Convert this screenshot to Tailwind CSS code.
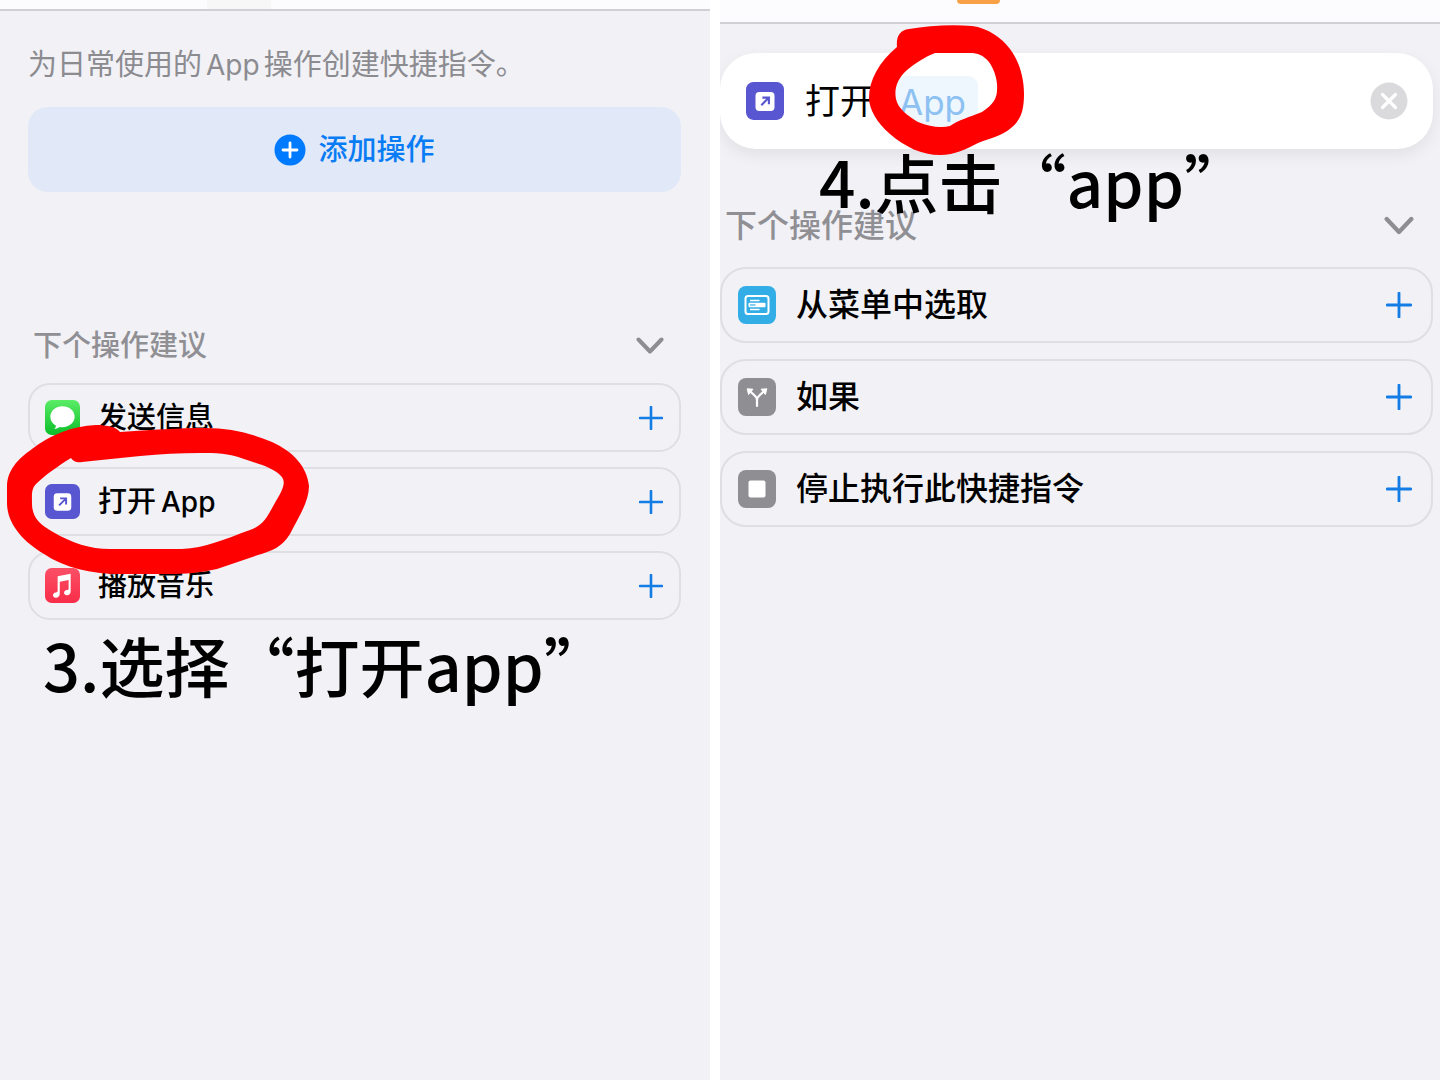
<!DOCTYPE html>
<html lang="zh-CN">
<head>
  <meta charset="UTF-8" />
  <title>快捷指令教程</title>
  <meta name="viewport" content="width=device-width, initial-scale=1.0"/>
  <script src="https://cdn.jsdelivr.net/npm/@tailwindcss/browser@4"></script>
</head>
<body class="bg-white text-black font-[Inter,'Noto_Sans_CJK_SC',sans-serif]">

  <!-- shared icons -->
  <svg class="hidden">
    <symbol id="plus" viewBox="0 0 24 24"><path d="M12 1v22M1 12h22" fill="none" stroke="#147ce5" stroke-width="2.6" stroke-linecap="round"/></symbol>
    <symbol id="chevron" viewBox="0 0 28 18"><path d="M2.500 2.500L14 14.500L25.500 2.500" fill="none" stroke="#8d8d92" stroke-width="4" stroke-linecap="round" stroke-linejoin="round"/></symbol>
    <symbol id="open-app" viewBox="0 0 36 36">
      <rect width="36" height="36" rx="7" fill="#5856d0"/>
      <rect x="9" y="9.500" width="18" height="18" rx="3.500" fill="#fff"/>
      <path d="M14.500 22L21 15.500M15.500 14.800H21.700V21" fill="none" stroke="#5856d0" stroke-width="2"/>
    </symbol>
  </svg>

  <div class="flex gap-[10px] min-h-screen">

    <!-- step 3 -->
    <main class="relative flex-[71] bg-[#f1f1f6] overflow-hidden">
      <header class="h-[11px] bg-[#fcfcfe] border-b-2 border-[#d0d0d4] flex justify-center pr-[232px]"><div class="w-16 bg-[#f7f7f8]"></div></header>
      <div class="pl-7 pr-[29px]">
        <p class="pt-[34px] text-[29px] leading-10 text-[#8b8b90]">为日常使用的<span class="mx-1 text-[28px]">App</span>操作创建快捷指令。</p>
        <button class="mt-[22px] w-full h-[85px] rounded-[20px] bg-[#e1e8f7] flex items-center justify-center gap-3 text-[29px] font-medium text-[#087cf4]">
          <svg class="w-8 h-8" viewBox="0 0 32 32"><circle cx="16" cy="16" r="15.500" fill="#007aff"/><path d="M16 9v14M9 16h14" stroke="#fff" stroke-width="2.800" stroke-linecap="round"/></svg>
          添加操作
        </button>
        <div class="mt-[134px] pl-[5px] pr-[17px] flex items-center justify-between">
          <h2 class="text-[29px] leading-10 font-medium text-[#8f8f94]">下个操作建议</h2>
          <button aria-label="收起"><svg class="w-7 h-[18px]"><use href="#chevron"/></svg></button>
        </div>
        <ul class="mt-[17px] flex flex-col gap-[15px] text-[29px] font-medium">
          <li class="h-[69px] pl-[15px] pr-4 border-2 border-[#dedee3] rounded-[22px] flex items-center gap-[18px]">
            <svg class="w-[35px] h-[35px]" viewBox="0 0 36 36">
              <defs><linearGradient id="green" x2="0" y2="1"><stop stop-color="#5bed67"/><stop offset="1" stop-color="#0bbd29"/></linearGradient></defs>
              <rect width="36" height="36" rx="7" fill="url(#green)"/>
              <path d="M18 6.500C11 6.500 5.500 11.300 5.500 17.300C5.500 21.200 7.800 24.500 11.300 26.500C11.200 27.800 10.500 28.800 9.400 29.600C11.900 29.600 13.700 28.800 15.100 27.700C16 27.900 17 28 18 28C25 28 30.500 23.200 30.500 17.300C30.500 11.300 25 6.500 18 6.500Z" fill="#fff"/>
            </svg>
            <span class="flex-1">发送信息</span>
            <button aria-label="添加发送信息"><svg class="w-6 h-6"><use href="#plus"/></svg></button>
          </li>
          <li class="h-[69px] pl-[15px] pr-4 border-2 border-[#dedee3] rounded-[22px] flex items-center gap-[18px]">
            <svg class="w-[35px] h-[35px]"><use href="#open-app"/></svg>
            <span class="flex-1">打开<span class="ml-[5px] text-[28px]">App</span></span>
            <button aria-label="添加打开 App"><svg class="w-6 h-6"><use href="#plus"/></svg></button>
          </li>
          <li class="h-[69px] pl-[15px] pr-4 border-2 border-[#dedee3] rounded-[22px] flex items-center gap-[18px]">
            <svg class="w-[35px] h-[35px]" viewBox="0 0 36 36">
              <defs><linearGradient id="red" x2="0" y2="1"><stop stop-color="#fb4f66"/><stop offset="1" stop-color="#f92d49"/></linearGradient></defs>
              <rect width="36" height="36" rx="7" fill="url(#red)"/>
              <path fill-rule="evenodd" d="M13 8.600L26.400 5.800V23.800C26.400 26.500 24.800 28 22.500 28C20.800 28 19.600 27 19.600 25.500C19.600 23.900 20.700 23 22.500 22.700C23.800 22.400 24.300 22 24.300 21V12.300L15.200 14.200V26.200C15.200 29 13.600 30.500 11.200 30.500C9.400 30.500 8.200 29.400 8.200 27.900C8.200 26.300 9.400 25.400 11.100 25.100C12.400 24.800 13 24.400 13 23.400Z" fill="#fff"/>
            </svg>
            <span class="flex-1">播放音乐</span>
            <button aria-label="添加播放音乐"><svg class="w-6 h-6"><use href="#plus"/></svg></button>
          </li>
        </ul>
        <p class="pl-[15px] text-[65px] leading-[88px] font-medium whitespace-nowrap font-['Noto_Sans_CJK_SC',sans-serif]">3.选择“打开app”</p>
      </div>
      <!-- hand-drawn ring round the second row -->
      <svg class="absolute left-0 top-[420px] w-[320px] h-[160px] pointer-events-none" viewBox="0 420 320 160">
        <path fill="#f00" fill-rule="evenodd" d="M120 432C150 430 180 428 205 428C230 428 250 433 272 442C294 452 307 467 309 486C309 502 298 518 290 534C282 547 272 551 258 555L217 569C200 573 185 574 168 574H118C92 574 65 568 44 554C22 541 7 523 7 503V487C7 470 18 459 32 449C50 435 72 426 96 425C108 425 116 427 120 432ZM71 458C58 466 44 476 36 484C31 489 32 496 32 504C32 517 40 525 53 532C72 543 90 549 110 549H182C205 548 225 539 250 530C265 525 269 513 276 501C284 488 286 481 281 476C274 468 259 464 244 459C228 453 216 453 200 453C160 453 120 458 82 462C76 463 73 461 71 458Z"/>
      </svg>
    </main>

    <!-- step 4 -->
    <section class="relative flex-[72] bg-[#f1f1f6] overflow-hidden">
      <header class="h-6 bg-[#fcfcfe] border-b-2 border-[#d0d0d4] flex justify-center pr-[203px]"><div class="w-[43px] h-1 rounded-b-md bg-[#f7a046]"></div></header>
      <div class="pr-[7px]">
        <div class="mt-[29px] h-24 pl-[26px] pr-[25px] rounded-[36px] bg-white shadow-[0_6px_16px_rgba(0,0,0,0.07)] flex items-center">
          <svg class="w-[38px] h-[38px]"><use href="#open-app"/></svg>
          <span class="ml-[21px] text-[35px]">打开</span>
          <button class="ml-3 h-[50px] px-3 rounded-[10px] bg-[#eef6fe] text-[35px] text-[#8cc1f2]">App</button>
          <button class="ml-auto" aria-label="清除">
            <svg class="w-[38px] h-[38px]" viewBox="0 0 38 38"><circle cx="19" cy="19" r="18.500" fill="#dadadc"/><path d="M12.500 12.500l13 13M25.500 12.500l-13 13" stroke="#fff" stroke-width="3.200" stroke-linecap="round"/></svg>
          </button>
        </div>
        <div class="mt-[57px] pl-[5px] pr-[19px] flex items-center justify-between">
          <h2 class="text-[32px] leading-10 font-medium text-[#8f8f94]">下个操作建议</h2>
          <button aria-label="收起"><svg class="w-[30px] h-5"><use href="#chevron"/></svg></button>
        </div>
        <ul class="mt-[21px] flex flex-col gap-4 text-[32px] font-medium">
          <li class="h-[76px] pl-4 pr-[19px] border-2 border-[#dedee3] rounded-[26px] flex items-center gap-5">
            <svg class="w-[38px] h-[38px]" viewBox="0 0 38 38">
              <rect width="38" height="38" rx="8" fill="#32ade6"/>
              <rect x="7.500" y="10" width="23" height="18" rx="2.500" fill="none" stroke="#fff" stroke-width="2"/>
              <path d="M12 14.500h9.500M12 23.500h9.500" stroke="#fff" stroke-width="1.500"/>
              <rect x="10.500" y="16.800" width="17" height="4.400" rx="1" fill="#fff"/>
              <path d="M12 19h5.500" stroke="#32ade6" stroke-width="1.200"/>
            </svg>
            <span class="flex-1">从菜单中选取</span>
            <button aria-label="添加从菜单中选取"><svg class="w-[26px] h-[26px]"><use href="#plus"/></svg></button>
          </li>
          <li class="h-[76px] pl-4 pr-[19px] border-2 border-[#dedee3] rounded-[26px] flex items-center gap-5">
            <svg class="w-[38px] h-[38px]" viewBox="0 0 38 38">
              <rect width="38" height="38" rx="8" fill="#8e8e93"/>
              <path d="M19 28V22C19 19.500 17.500 18 16 16.800L12 13.200M19 22C19 19.500 20.500 18 22 16.800L26 13.200" fill="none" stroke="#fff" stroke-width="2.200" stroke-linecap="round"/>
              <path d="M9.200 10.800L15 11.200L10.600 16.500ZM28.800 10.800L23 11.200L27.400 16.500Z" fill="#fff" stroke="#fff" stroke-linejoin="round"/>
            </svg>
            <span class="flex-1">如果</span>
            <button aria-label="添加如果"><svg class="w-[26px] h-[26px]"><use href="#plus"/></svg></button>
          </li>
          <li class="h-[76px] pl-4 pr-[19px] border-2 border-[#dedee3] rounded-[26px] flex items-center gap-5">
            <svg class="w-[38px] h-[38px]" viewBox="0 0 38 38">
              <rect width="38" height="38" rx="8" fill="#8e8e93"/>
              <rect x="10.500" y="10.500" width="17" height="17" rx="2" fill="#fff"/>
            </svg>
            <span class="flex-1">停止执行此快捷指令</span>
            <button aria-label="添加停止执行此快捷指令"><svg class="w-[26px] h-[26px]"><use href="#plus"/></svg></button>
          </li>
        </ul>
      </div>
      <!-- hand-drawn ring round the App token -->
      <svg class="absolute left-[140px] top-[20px] w-[170px] h-[140px] pointer-events-none" viewBox="860 20 170 140">
        <path fill="#f00" fill-rule="evenodd" d="M897 47C896 36 900 30 909 29C928 26 950 24 972 26C988 28 1002 38 1010 49C1019 61 1024 77 1024 94C1024 110 1021 120 1011 128C1002 136 990 138 978 143C966 149 955 155 940 155C922 155 905 147 890 134C877 123 869 109 869 98C869 80 879 62 897 47ZM935 53C925 57 915 63 907 70C897 79 894 89 896 99C898 109 908 116 918 122C930 127 941 128 950 126C958 120 970 117 982 112C993 105 997 98 997 90C998 80 994 69 989 62C983 55 978 53 970 53Z"/>
      </svg>
      <p class="absolute left-[99px] top-[132px] text-[64px] leading-[96px] font-medium whitespace-nowrap font-['Noto_Sans_CJK_SC',sans-serif]">4.点击“app”</p>
    </section>

  </div>
</body>
</html>
